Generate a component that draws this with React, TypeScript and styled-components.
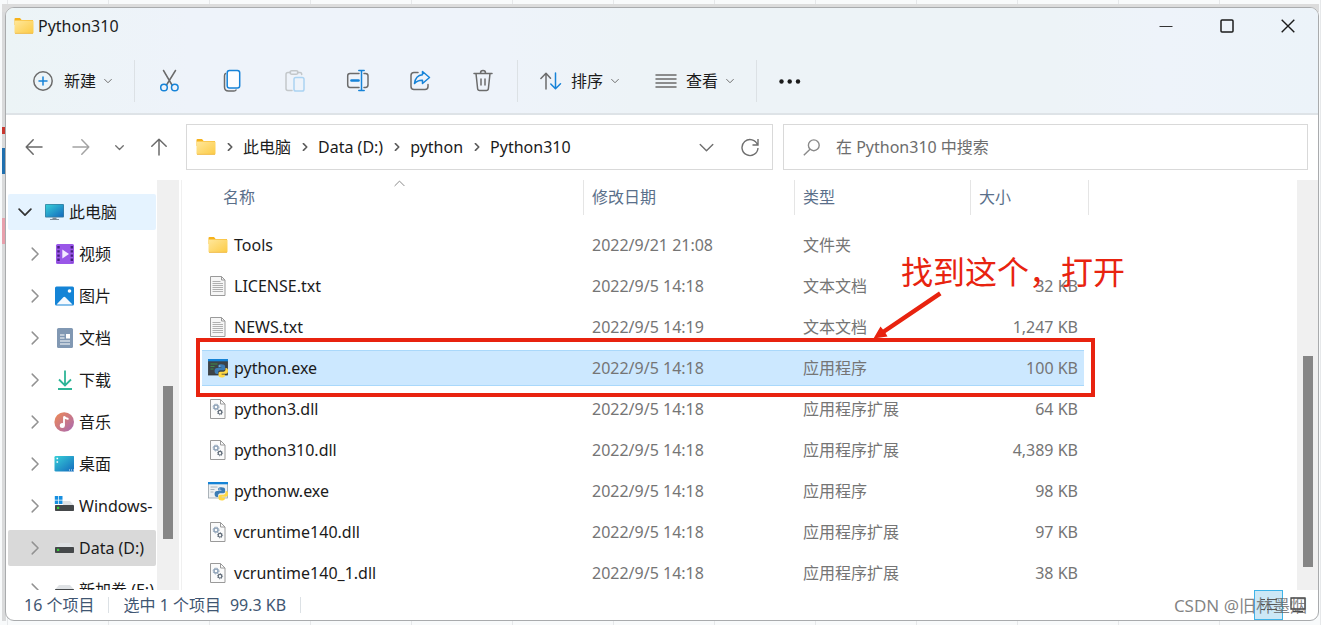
import React from "react";
import styled, { createGlobalStyle, css } from "styled-components";

const GlobalStyle = createGlobalStyle`
  *, *::before, *::after { box-sizing: border-box; }
  body {
    margin: 0;
    font-family: "Noto Sans", "Noto Sans CJK SC", sans-serif;
    font-size: 16px;
    line-height: 24px;
    color: #1b1b1b;
    background:
      linear-gradient(#c8372f, #c8372f) 2px 127px / 3px 7px no-repeat,
      linear-gradient(#1f6fae, #1f6fae) 2px 148px / 3px 26px no-repeat,
      linear-gradient(#e8a0ac, #e8a0ac) 2px 218px / 3px 26px no-repeat,
      linear-gradient(#dcdcdc, #dcdcdc) 2px 4px / calc(100% - 4px) 8px no-repeat,
      linear-gradient(#d9dadb, #d9dadb) 2px 8px / 4px calc(100vh - 12px) no-repeat,
      repeating-linear-gradient(90deg, transparent 0 7px, #e6e8ea 7px 8px, transparent 8px 101px),
      #f8fafb;
  }
  button { font: inherit; color: inherit; background: none; border: 0; padding: 0; margin: 0; }
  a { color: inherit; text-decoration: none; }
  svg { display: block; flex: none; }
`;

const Desktop = styled.div`
  height: 100vh;
  padding: 7px 2px 4px 5px;
  overflow: hidden;
`;

const Window = styled.div`
  display: flex;
  flex-direction: column;
  height: 100%;
  background: #fff;
  border: 1px solid #a9abad;
  border-radius: 9px;
  overflow: hidden;
`;

const Chrome = styled.header`
  background: linear-gradient(90deg, #ecf4f6 0%, #eef3fa 14%, #eef3fa 38%, #edf3f7 48%, #edf3f7 80%, #eef3fa 88%, #ecf3f9 100%);
  border-bottom: 2px solid #dee3e7;
`;

const TitleBar = styled.div`
  display: flex;
  align-items: center;
  height: 36px;
  padding-left: 8px;
`;

const Title = styled.h1`
  flex: 1;
  margin: 0 0 0 4px;
  font-size: 16px;
  font-weight: 400;
`;

const CaptionButton = styled.button`
  display: grid;
  place-items: center;
  width: 61px;
  height: 36px;
`;

const CommandBar = styled.div`
  display: flex;
  align-items: center;
  height: 69px;
  padding: 5px 0 0 17px;
`;

const CommandButton = styled.button`
  display: flex;
  align-items: center;
  height: 42px;
  padding: 0 10px;
  & + & { margin-left: 16px; }
`;

const CommandLabel = styled.span`
  margin: 0 8px 0 9px;
`;

const IconButtons = styled.div`
  display: flex;
  gap: 20px;
`;

const IconButton = styled.button`
  display: grid;
  place-items: center;
  width: 43px;
  height: 42px;
`;

const Divider = styled.span<{ $h: number; $gap: number }>`
  width: 1px;
  height: ${(p) => p.$h}px;
  margin: 0 ${(p) => p.$gap}px;
  background: #dce1e5;
`;

const NavRow = styled.div`
  display: flex;
  align-items: center;
  padding: 9px 10px 10px 4px;
`;

const NavButton = styled.button<{ $w: number }>`
  display: grid;
  place-items: center;
  width: ${(p) => p.$w}px;
  height: 46px;
`;

const field = css`
  display: flex;
  align-items: center;
  height: 46px;
  min-width: 0;
  border: 1px solid #d9d9d9;
  background: #fff;
`;

const AddressBar = styled.nav`
  ${field}
  flex: 576;
  margin: 0 10px 0 2px;
  padding-left: 9px;
`;

const Crumb = styled.a`
  white-space: nowrap;
`;

const CrumbSep = styled.span`
  display: grid;
  place-items: center;
  width: 27px;
`;

const Spacer = styled.span`
  flex: 1;
`;

const FieldButton = styled.button`
  display: grid;
  place-items: center;
  width: 44px;
  height: 44px;
`;

const SearchBox = styled.label`
  ${field}
  flex: 504;
  padding-left: 19px;
  gap: 16px;
`;

const SearchInput = styled.input`
  flex: 1;
  min-width: 0;
  padding: 0;
  border: 0;
  outline: 0;
  font: inherit;
  background: none;
  &::placeholder { color: #6d6d6d; opacity: 1; }
`;

const Body = styled.div`
  display: flex;
  flex: 1;
  min-height: 0;
`;

const Tree = styled.ul`
  width: 151px;
  margin: 0;
  padding: 14px 1px 0 2px;
  list-style: none;
  overflow: hidden;
`;

const TreeRow = styled.li<{ $root?: boolean; $tone?: string }>`
  display: flex;
  align-items: center;
  height: 36px;
  margin-bottom: 6px;
  padding-left: ${(p) => (p.$root ? 10 : 20)}px;
  border-radius: 2px;
  background: ${(p) => p.$tone ?? "transparent"};
  white-space: nowrap;
  overflow: hidden;
`;

const TreeIcon = styled.span`
  margin: 0 5px 0 12px;
`;

const ScrollTrack = styled.div<{ $w: number }>`
  display: flex;
  flex-direction: column;
  align-items: center;
  width: ${(p) => p.$w}px;
  background: #f0f0f0;
`;

const ScrollPart = styled.span<{ $share: number; $thumb?: boolean }>`
  flex: ${(p) => p.$share};
  width: 10px;
  background: ${(p) => (p.$thumb ? "#868686" : "transparent")};
`;

const ListPane = styled.main`
  position: relative;
  flex: 1;
  min-width: 0;
  margin-left: 2px;
  padding-left: 20px;
  border-left: 1px solid #f0f0f0;
  overflow: hidden;
`;

const FileTable = styled.table`
  width: 887px;
  table-layout: fixed;
  border-collapse: separate;
  border-spacing: 0;
`;

const Th = styled.th<{ $w: number }>`
  width: ${(p) => p.$w}px;
  height: 45px;
  padding: 0;
  font-weight: 400;
  text-align: left;
  vertical-align: top;
  color: #5a6f8a;
`;

const HeadCell = styled.div<{ $first?: boolean }>`
  position: relative;
  height: 35px;
  margin-left: ${(p) => (p.$first ? 13 : 0)}px;
  padding: 5px 8px;
  border-right: 1px solid #e5e5e5;
`;

const SortMark = styled.span`
  position: absolute;
  top: -2px;
  left: calc(50% - 5px);
`;

const Td = styled.td<{ $right?: boolean }>`
  height: 41px;
  padding: 0 8px;
  border: 0 solid transparent;
  border-width: 2px 0 3px;
  background-clip: padding-box;
  color: #757575;
  white-space: nowrap;
  text-align: ${(p) => (p.$right ? "right" : "left")};
  &:first-child { padding-left: 6px; color: #1b1b1b; }
  &:last-child { border-right-width: 5px; padding-right: 6px; }
`;

const FileRow = styled.tr<{ $selected?: boolean }>`
  ${(p) =>
    p.$selected &&
    css`
      ${Td} {
        background-color: #cce8ff;
        box-shadow: inset 0 1px #a9d8fb, inset 0 -1px #a9d8fb;
      }
    `}
`;

const FileName = styled.span`
  display: flex;
  align-items: center;
  gap: 6px;
`;

const Highlight = styled.div`
  position: absolute;
  left: 14px;
  top: 158px;
  width: 899px;
  height: 59px;
  border: 4px solid #e8230f;
`;

const Note = styled.p`
  position: absolute;
  left: 719px;
  top: 68px;
  margin: 0;
  font-size: 32px;
  line-height: 48px;
  color: #e8230f;
  white-space: nowrap;
`;

const NoteArrow = styled.svg`
  position: absolute;
  left: 690px;
  top: 111px;
`;

const StatusBar = styled.footer`
  position: relative;
  display: flex;
  align-items: center;
  height: 30px;
  padding: 0 6px 0 18px;
  color: #3f5672;
`;

const StatusText = styled.span`
  & + & { margin-left: 9px; }
`;

const ViewButton = styled.button<{ $on?: boolean }>`
  display: grid;
  place-items: center;
  width: 29px;
  height: 30px;
  ${(p) => p.$on && "background: #cce8f6; border: 1px solid #40b4e8;"}
`;

const Watermark = styled.span`
  position: absolute;
  right: 11px;
  top: 4px;
  font-size: 17px;
  color: rgba(90, 90, 90, 0.75);
  white-space: nowrap;
`;

const Chevron = ({ s = 8, dir = "down", color = "#6f6f6f", w = 1 }: { s?: number; dir?: string; color?: string; w?: number }) => (
  <svg width={s} height={s} viewBox="0 0 10 10" fill="none" stroke={color} strokeWidth={(w * 10) / s} strokeLinecap="round" strokeLinejoin="round">
    <path d={dir === "down" ? "M.8 3 5 7.2 9.2 3" : dir === "up" ? "M.8 7 5 2.8 9.2 7" : "M3 .8 7.2 5 3 9.2"} />
  </svg>
);

const Folder = () => (
  <svg width="20" height="18" viewBox="0 0 20 18">
    <defs>
      <linearGradient id="folder" x1="0" y1="0" x2="1" y2="1">
        <stop offset="0" stopColor="#ffe79b" />
        <stop offset="1" stopColor="#fccb45" />
      </linearGradient>
    </defs>
    <path d="M.5 2Q.5 1 1.5 1H6l1.6 2H19v5H.5z" fill="#f6b21b" />
    <rect x=".5" y="3.6" width="19" height="13" rx="1" fill="url(#folder)" />
    <path d="M1 16.4h18" stroke="#eeb640" strokeWidth=".8" />
  </svg>
);

const G = "#6b6b6b";
const B = "#1683d8";

const stroke = { fill: "none", strokeWidth: 1.5, strokeLinecap: "round", strokeLinejoin: "round" } as const;

const NewIcon = () => (
  <svg width="22" height="22" viewBox="0 0 22 22" {...stroke}>
    <circle cx="10" cy="11" r="9.2" stroke={G} />
    <path d="M10 7v8M6 11h8" stroke={B} />
  </svg>
);
const CutIcon = () => (
  <svg width="24" height="24" viewBox="0 0 24 24" {...stroke}>
    <path d="M6.5 1.5 15 16M18.5 1.5 9.500 16" stroke={G} />
    <circle cx="7" cy="18.5" r="3.3" stroke={B} />
    <circle cx="17.800" cy="18.5" r="3.3" stroke={B} />
  </svg>
);
const CopyIcon = () => (
  <svg width="24" height="24" viewBox="0 0 24 24" {...stroke}>
    <path d="M5.500 4.500Q4.500 5 4.500 7v11q0 4 4 4h5.500q1.500 0 2-1" stroke={G} />
    <rect x="7.200" y="1.500" width="12.500" height="17.500" rx="2.300" stroke={B} fill="#fbfdff" />
  </svg>
);
const PasteIcon = () => (
  <svg width="24" height="24" viewBox="0 0 24 24" {...stroke}>
    <path d="M7.500 3.500H5q-2 0-2 2v14q0 2 2 2h4M14.500 3.500H17q1.700 0 1.700 2" stroke="#c3c7ca" />
    <rect x="7" y="1.800" width="8" height="3.400" rx="1.700" stroke="#c3c7ca" />
    <rect x="11" y="8.500" width="10" height="13.500" rx="1.800" stroke="#abd3f2" />
  </svg>
);
const RenameIcon = () => (
  <svg width="24" height="24" viewBox="0 0 24 24" {...stroke}>
    <path d="M13 4.500H4q-2.300 0-2.300 2.300v9Q1.700 18.500 4 18.500h9M18 4.500h1.500q2.500 0 2.500 2.300v9q0 2.700-2.500 2.700H18" stroke={G} />
    <path d="M5.500 11.500h7" stroke={B} strokeWidth="2.600" />
    <path d="M12.800 1.500h5.400M12.800 21.500h5.400M15.500 1.500v20" stroke={B} />
  </svg>
);
const ShareIcon = () => (
  <svg width="24" height="24" viewBox="0 0 24 24" {...stroke}>
    <path d="M9 3.500H5Q2 3.500 2 6.500v11q0 3 3 3h11q3 0 3-3v-2" stroke={G} />
    <path d="M13.500 2.500 20.500 8.500 13.500 14.500v-3.300Q8.500 11 5.500 14.500 6.500 6.500 13.500 5.800z" stroke={B} />
  </svg>
);
const TrashIcon = () => (
  <svg width="24" height="24" viewBox="0 0 24 24" {...stroke}>
    <path d="M2 4.500h18M4 4.500 5.600 19.500q.2 2 2 2h6.800q1.800 0 2-2L18 4.500M8.500 4q0-2.500 2.500-2.500T13.500 4M9 10v6M13 10v6" stroke={G} />
  </svg>
);
const SortIcon = () => (
  <svg width="22" height="22" viewBox="0 0 22 22" {...stroke}>
    <path d="M6 19V3.500M.9 8.500 6 3.300l4.500 5" stroke={G} />
    <path d="M15.500 3v15.500M10.800 14l4.700 4.800 5-5" stroke={B} />
  </svg>
);
const ViewIcon = () => (
  <svg width="22" height="22" viewBox="0 0 22 22" {...stroke}>
    <path d="M1 5h20M1 9h20M1 13h20M1 17h20" stroke={G} />
  </svg>
);
const DotsIcon = () => (
  <svg width="22" height="22" viewBox="0 0 22 22" fill="#1b1b1b">
    <circle cx="2.500" cy="11.500" r="2.200" />
    <circle cx="10.700" cy="11.500" r="2.200" />
    <circle cx="19" cy="11.500" r="2.200" />
  </svg>
);

const Arrow = ({ turn, color }: { turn: number; color: string }) => (
  <svg width="18" height="18" viewBox="0 0 18 18" {...stroke} stroke={color}>
    <g transform={`rotate(${turn} 9 9)`}>
      <path d="M17 9H1.200M8.200 1.800 1.200 9l7 7.200" />
    </g>
  </svg>
);

const MonitorIcon = () => (
  <svg width="20" height="20" viewBox="0 0 20 20">
    <defs>
      <linearGradient id="screen" x1="0" y1="0" x2="1" y2="1">
        <stop offset="0" stopColor="#37cfd8" />
        <stop offset="1" stopColor="#1369bd" />
      </linearGradient>
    </defs>
    <rect x="1" y="2" width="19" height="13.500" rx="1" fill="#3a7c9d" />
    <rect x="1.700" y="2.700" width="17.600" height="12" fill="url(#screen)" />
    <path d="M8.500 15.500h4v1.800h-4zM6 17h9v1H6z" fill="#7c8a95" />
  </svg>
);
const VideoIcon = () => (
  <svg width="20" height="20" viewBox="0 0 20 20">
    <rect x="2" width="18" height="20" rx="1.500" fill="#9a57e8" />
    <path d="M4.500 2v17M17.800 2v17" stroke="#46207f" strokeWidth="2.400" strokeDasharray="2.400 1.800" />
    <path d="M8.300 5.500 15 10l-6.700 4.500z" fill="#f3ebff" />
  </svg>
);
const PictureIcon = () => (
  <svg width="20" height="20" viewBox="0 0 20 20">
    <rect x="1" y=".5" width="19" height="19" rx="1.500" fill="#1484d6" />
    <path d="m2.500 18.500 6.800-7.200q1-.9 2 0l7.200 7.200z" fill="#f5faff" />
    <circle cx="15.500" cy="5" r="1.800" fill="#fff" />
  </svg>
);
const DocumentIcon = () => (
  <svg width="20" height="20" viewBox="0 0 20 20">
    <rect x="3" width="16" height="20" rx="1.500" fill="#8198b3" />
    <path d="M6 7h4.500M6 10h4.500M6 13h10M6 16h10" stroke="#fff" strokeWidth="1.200" />
    <path d="M12 6h4v4.500h-4z" fill="#fff" />
  </svg>
);
const DownloadIcon = () => (
  <svg width="20" height="20" viewBox="0 0 20 20" fill="none" stroke="#2eb597" strokeWidth="1.800">
    <path d="M11 .5v14.500M5 9.500l6 6 6-6M4 19h14" />
  </svg>
);
const MusicIcon = () => (
  <svg width="20" height="20" viewBox="0 0 20 20">
    <defs>
      <linearGradient id="music" x1="0" y1="0" x2="1" y2="1">
        <stop offset="0" stopColor="#f08a52" />
        <stop offset="1" stopColor="#a768b5" />
      </linearGradient>
    </defs>
    <circle cx="10.200" cy="10" r="9.800" fill="url(#music)" />
    <circle cx="8.300" cy="13.500" r="2.500" fill="#fff" />
    <path d="M10 13.500V4.500q1 2 4.500 2.500" fill="none" stroke="#fff" strokeWidth="1.800" />
  </svg>
);
const DesktopIcon = () => (
  <svg width="20" height="20" viewBox="0 0 20 20">
    <rect x=".5" y="2" width="20" height="15.500" rx="1.300" fill="url(#screen)" />
    <path d="M2.500 4.500h1.600M2.500 8h1.600" stroke="#fff" strokeWidth="1.500" />
    <path d="M15 16h5" stroke="#d8eefc" strokeWidth="1" strokeDasharray="1 1" />
  </svg>
);
const DriveIcon = ({ system }: { system?: boolean }) => (
  <svg width="20" height="20" viewBox="0 0 20 20">
    <path d="M5 5h11l4 4.500H1z" fill="#dfe2e5" />
    <rect x="1" y="9" width="19" height="6" rx=".8" fill="#45484a" />
    <rect x="3" y="10.800" width="2.200" height="2.200" fill="#37d13a" />
    {system && (
      <>
        <path d="M0 0h9v9H0z" fill="#fff" />
        <path d="M.8 0h3.500v3.700H.8zM5 0h3.500v3.700H5zM.8 4.400h3.500v3.700H.8zM5 4.400h3.500v3.700H5z" fill="#178fe0" />
      </>
    )}
  </svg>
);

const TextFileIcon = () => (
  <svg width="20" height="20" viewBox="0 0 20 20">
    <path d="M2.500.5h11l3.500 3.500v15.500H2.500z" fill="#f6f6f6" stroke="#9a9a9a" />
    <path d="M4.500 5.500h8M4.500 7.500h10.500M4.500 9.500h10.500M4.500 11.500h10.500M4.500 13.500h10.500M4.500 15.500h10.500" stroke="#a8a8a8" strokeWidth=".9" />
    <path d="M13.500.5V4H17" fill="none" stroke="#9a9a9a" />
  </svg>
);
const DllIcon = () => (
  <svg width="20" height="20" viewBox="0 0 20 20">
    <path d="M2.500.5h10l4.500 4.500v14.500H2.500z" fill="#fbfbfb" stroke="#9a9a9a" />
    <path d="M12.500.5V5H17" fill="none" stroke="#9a9a9a" />
    <circle cx="8" cy="8" r="2" fill="none" stroke="#8fa3b8" strokeWidth="1.400" />
    <circle cx="8" cy="8" r="3" fill="none" stroke="#8fa3b8" strokeWidth="1" strokeDasharray="1.200 1.200" />
    <circle cx="12" cy="13.200" r="1.800" fill="none" stroke="#5f6b78" strokeWidth="1.200" />
    <circle cx="12" cy="13.200" r="2.600" fill="none" stroke="#5f6b78" strokeWidth=".8" strokeDasharray="1 1" />
  </svg>
);
const PythonIcon = ({ dark }: { dark?: boolean }) => (
  <svg width="20" height="20" viewBox="0 0 20 20">
    <rect x=".5" y="1.500" width="19" height="15.500" fill={dark ? "#3d4347" : "#eef1f3"} stroke={dark ? "#33383c" : "#98a2aa"} strokeWidth=".8" />
    <rect y="1" width="20" height="2.300" fill="#1583d6" />
    <path d="M2.500 6h7M2.500 8.500h4M2.500 11h3" stroke={dark ? "#3f8c4b" : "#a9b4bd"} strokeWidth="1" />
    <path d="M13.200 6.300c-3 0-3 1.200-3 2v1.200h3.200v.6H9c-1.500 0-2.400 1-2.400 3s.9 3 2.200 3h1.300v-1.600c0-1.200.9-2.200 2.200-2.200h3.100c1 0 1.700-.8 1.700-1.700V8.300c0-1.300-1.200-2-3.900-2z" fill="#3c7cb4" />
    <path d="M13.800 19.600c3 0 3.100-1.200 3.100-2v-1.200h-3.300v-.6H18c1.400 0 2-1 2-3s-.7-2.800-1.900-2.800h-.6v1.600c0 1.200-.9 2.100-2.100 2.100h-3.200c-1 0-1.700.8-1.700 1.700v2.200c0 1.300 1.100 2 3.300 2z" fill="#ffd845" />
    <circle cx="11.800" cy="8" r=".6" fill="#fff" />
  </svg>
);

const tree: { label: string; icon: React.ReactNode; tone?: string }[] = [
  { label: "视频", icon: <VideoIcon /> },
  { label: "图片", icon: <PictureIcon /> },
  { label: "文档", icon: <DocumentIcon /> },
  { label: "下载", icon: <DownloadIcon /> },
  { label: "音乐", icon: <MusicIcon /> },
  { label: "桌面", icon: <DesktopIcon /> },
  { label: "Windows-", icon: <DriveIcon system /> },
  { label: "Data (D:)", icon: <DriveIcon />, tone: "#d9d9d9" },
  { label: "新加卷 (E:)", icon: <DriveIcon /> },
];

const files: { name: string; icon: React.ReactNode; date: string; type: string; size: string; selected?: boolean }[] = [
  { name: "Tools", icon: <Folder />, date: "2022/9/21 21:08", type: "文件夹", size: "" },
  { name: "LICENSE.txt", icon: <TextFileIcon />, date: "2022/9/5 14:18", type: "文本文档", size: "32 KB" },
  { name: "NEWS.txt", icon: <TextFileIcon />, date: "2022/9/5 14:19", type: "文本文档", size: "1,247 KB" },
  { name: "python.exe", icon: <PythonIcon dark />, date: "2022/9/5 14:18", type: "应用程序", size: "100 KB", selected: true },
  { name: "python3.dll", icon: <DllIcon />, date: "2022/9/5 14:18", type: "应用程序扩展", size: "64 KB" },
  { name: "python310.dll", icon: <DllIcon />, date: "2022/9/5 14:18", type: "应用程序扩展", size: "4,389 KB" },
  { name: "pythonw.exe", icon: <PythonIcon />, date: "2022/9/5 14:18", type: "应用程序", size: "98 KB" },
  { name: "vcruntime140.dll", icon: <DllIcon />, date: "2022/9/5 14:18", type: "应用程序扩展", size: "97 KB" },
  { name: "vcruntime140_1.dll", icon: <DllIcon />, date: "2022/9/5 14:18", type: "应用程序扩展", size: "38 KB" },
];

const crumbs = ["此电脑", "Data (D:)", "python", "Python310"];

const tools: [string, React.ReactNode][] = [
  ["剪切", <CutIcon />],
  ["复制", <CopyIcon />],
  ["粘贴", <PasteIcon />],
  ["重命名", <RenameIcon />],
  ["共享", <ShareIcon />],
  ["删除", <TrashIcon />],
];

export default function App() {
  return (
    <Desktop>
      <GlobalStyle />
      <Window>
        <Chrome>
          <TitleBar>
            <Folder />
            <Title>Python310</Title>
            <CaptionButton aria-label="最小化">
              <svg width="14" height="14" viewBox="0 0 14 14" stroke="#333" strokeWidth="1.200"><path d="M.5 7.500h13" /></svg>
            </CaptionButton>
            <CaptionButton aria-label="最大化">
              <svg width="14" height="14" viewBox="0 0 14 14" fill="none" stroke="#1b1b1b" strokeWidth="1.500"><rect x="1" y="1" width="12" height="12" rx="1" /></svg>
            </CaptionButton>
            <CaptionButton aria-label="关闭">
              <svg width="14" height="14" viewBox="0 0 14 14" stroke="#1b1b1b" strokeWidth="1.400"><path d="m.7.700 12.600 12.600M13.300.7.700 13.300" /></svg>
            </CaptionButton>
          </TitleBar>
          <CommandBar>
            <CommandButton>
              <NewIcon />
              <CommandLabel>新建</CommandLabel>
              <Chevron />
            </CommandButton>
            <Divider $h={42} $gap={12} />
            <IconButtons>
              {tools.map(([label, icon]) => (
                <IconButton key={label} aria-label={label}>{icon}</IconButton>
              ))}
            </IconButtons>
            <Divider $h={42} $gap={12} />
            <CommandButton>
              <SortIcon />
              <CommandLabel>排序</CommandLabel>
              <Chevron />
            </CommandButton>
            <CommandButton>
              <ViewIcon />
              <CommandLabel>查看</CommandLabel>
              <Chevron />
            </CommandButton>
            <Divider $h={42} $gap={12} />
            <CommandButton aria-label="更多">
              <DotsIcon />
            </CommandButton>
          </CommandBar>
        </Chrome>

        <NavRow>
          <NavButton $w={47} aria-label="后退"><Arrow turn={0} color="#6a6a6a" /></NavButton>
          <NavButton $w={47} aria-label="前进"><Arrow turn={180} color="#a3a3a3" /></NavButton>
          <NavButton $w={30} aria-label="最近浏览的位置"><Chevron s={9} w={1.3} /></NavButton>
          <NavButton $w={50} aria-label="上移"><Arrow turn={90} color="#6a6a6a" /></NavButton>
          <AddressBar aria-label="地址">
            <Folder />
            {crumbs.map((c) => (
              <React.Fragment key={c}>
                <CrumbSep><Chevron s={8} w={1.6} dir="right" color="#5c5c5c" /></CrumbSep>
                <Crumb href="#">{c}</Crumb>
              </React.Fragment>
            ))}
            <Spacer />
            <FieldButton aria-label="展开"><Chevron s={15} w={1.400} /></FieldButton>
            <FieldButton aria-label="刷新">
              <svg width="20" height="20" viewBox="0 0 20 20" fill="none" stroke="#6f6f6f" strokeWidth="1.400">
                <path d="M17.600 8A8 8 0 1 0 18 11M18 2v6h-5.500" />
              </svg>
            </FieldButton>
          </AddressBar>
          <SearchBox>
            <svg width="17" height="17" viewBox="0 0 17 17" fill="none" stroke="#8a8a8a" strokeWidth="1.400">
              <circle cx="10.800" cy="6.300" r="5.400" />
              <path d="M7 10.200.8 16.300" />
            </svg>
            <SearchInput aria-label="搜索" placeholder="在 Python310 中搜索" />
          </SearchBox>
        </NavRow>

        <Body>
          <Tree>
            <TreeRow $root $tone="#e5f3ff">
              <Chevron s={14} w={1.700} color="#333" />
              <TreeIcon><MonitorIcon /></TreeIcon>
              此电脑
            </TreeRow>
            {tree.map((t) => (
              <TreeRow key={t.label} $tone={t.tone}>
                <Chevron s={14} w={1.500} dir="right" color="#929292" />
                <TreeIcon>{t.icon}</TreeIcon>
                {t.label}
              </TreeRow>
            ))}
          </Tree>
          <ScrollTrack $w={22}>
            <ScrollPart $share={206} />
            <ScrollPart $share={153} $thumb />
            <ScrollPart $share={51} />
          </ScrollTrack>
          <ListPane>
            <FileTable>
              <thead>
                <tr>
                  <Th $w={382}>
                    <HeadCell $first>
                      名称
                      <SortMark><Chevron s={11} dir="up" color="#8a8a8a" /></SortMark>
                    </HeadCell>
                  </Th>
                  <Th $w={211}><HeadCell>修改日期</HeadCell></Th>
                  <Th $w={176}><HeadCell>类型</HeadCell></Th>
                  <Th $w={118}><HeadCell>大小</HeadCell></Th>
                </tr>
              </thead>
              <tbody>
                {files.map((f) => (
                  <FileRow key={f.name} $selected={f.selected}>
                    <Td><FileName>{f.icon}{f.name}</FileName></Td>
                    <Td>{f.date}</Td>
                    <Td>{f.type}</Td>
                    <Td $right>{f.size}</Td>
                  </FileRow>
                ))}
              </tbody>
            </FileTable>
            <Highlight />
            <Note>找到这个，打开</Note>
            <NoteArrow width="70" height="50" viewBox="0 0 70 50" aria-hidden="true">
              <path d="M67 .5 69.500 4.200 13.500 42 15.500 45.500 1.500 47.500 8.500 35.500 11 38.500z" fill="#e8230f" />
            </NoteArrow>
          </ListPane>
          <ScrollTrack $w={21}>
            <ScrollPart $share={176} />
            <ScrollPart $share={211} $thumb />
            <ScrollPart $share={23} />
          </ScrollTrack>
        </Body>

        <StatusBar>
          <StatusText>16 个项目</StatusText>
          <Divider $h={16} $gap={14} />
          <StatusText>选中 1 个项目</StatusText>
          <StatusText>99.3 KB</StatusText>
          <Divider $h={16} $gap={14} />
          <Spacer />
          <ViewButton $on aria-label="详细信息">
            <svg width="18" height="16" viewBox="0 0 18 16" fill="none" stroke="#555"><path d="M1 2.500h4M7 2.500h10M1 7.500h4M7 7.500h10M1 12.500h4M7 12.500h10" /></svg>
          </ViewButton>
          <ViewButton aria-label="大图标">
            <svg width="16" height="16" viewBox="0 0 16 16" fill="none" stroke="#444" strokeWidth="1.300"><path d="M1 1h14v11H1zM3 14.500h10" /></svg>
          </ViewButton>
          <Watermark>CSDN @旧林墨烟</Watermark>
        </StatusBar>
      </Window>
    </Desktop>
  );
}
